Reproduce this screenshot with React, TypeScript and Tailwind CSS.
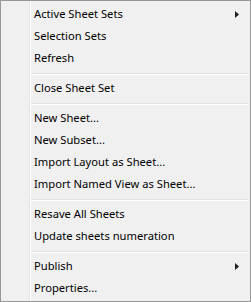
import React from 'react'

type Entry = { label: string; sub?: boolean } | 'sep'

const entries: Entry[] = [
  { label: 'Active Sheet Sets', sub: true },
  { label: 'Selection Sets' },
  { label: 'Refresh' },
  'sep',
  { label: 'Close Sheet Set' },
  'sep',
  { label: 'New Sheet...' },
  { label: 'New Subset...' },
  { label: 'Import Layout as Sheet...' },
  { label: 'Import Named View as Sheet...' },
  'sep',
  { label: 'Resave All Sheets' },
  { label: 'Update sheets numeration' },
  'sep',
  { label: 'Publish', sub: true },
  { label: 'Properties...' },
]

function Arrow() {
  return (
    <svg width="4" height="7" viewBox="0 0 4 7" className="block">
      <path d="M0 0 L4 3.5 L0 7 Z" fill="#1e1e1e" />
    </svg>
  )
}

export default function App() {
  return (
    <div
      className="flex h-[302px] w-[251px] border border-[#979797] bg-[#f0f0f0] text-[11.2px] text-black"
      style={{ fontFamily: '"Noto Sans", "Open Sans", sans-serif' }}
    >
      <div className="w-[29px] shrink-0 border-r border-[#e2e3e3]" />
      <div className="w-px shrink-0 bg-white" />
      <ul className="flex flex-1 flex-col py-[2px]">
        {entries.map((e, i) =>
          e === 'sep' ? (
            <li key={i} className="h-[8px] pt-[4px] pr-[2px]">
              <div className="h-px bg-[#e0e0e0]" />
              <div className="h-px bg-white" />
            </li>
          ) : (
            <li
              key={i}
              className="flex h-[22px] items-center justify-between pl-[3px] pr-[11px] leading-[22px]"
            >
              <span>{e.label}</span>
              {e.sub && <Arrow />}
            </li>
          ),
        )}
      </ul>
    </div>
  )
}
